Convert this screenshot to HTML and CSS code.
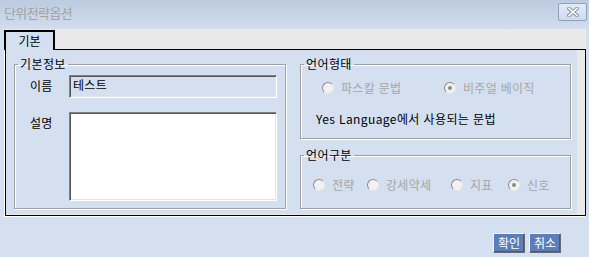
FILE: index.html
```html
<!DOCTYPE html>
<html lang="ko">
<head>
<meta charset="utf-8">
<title>단위전략옵션</title>
<link rel="stylesheet" href="styles.css">
</head>
<body>
<div class="window">
  <div class="titlebar">
    <span class="title">단위전략옵션</span>
    <button class="close" type="button" aria-label="닫기">
      <svg width="12" height="10" viewBox="0 0 12 10">
        <path d="M2 1.5 L10 8.5 M10 1.5 L2 8.5" stroke="#8794a8" stroke-width="3.6" stroke-linecap="square" fill="none"/>
        <path d="M2 1.5 L10 8.5 M10 1.5 L2 8.5" stroke="#ffffff" stroke-width="1.6" stroke-linecap="square" fill="none"/>
      </svg>
    </button>
  </div>

  <div class="tabctl">
    <div class="tabstrip">
      <div class="tab">기본</div>
      <div class="tabfill"></div>
    </div>
    <div class="page">
      <div class="pagebody">
        <fieldset class="group info">
          <legend>기본정보</legend>
          <div class="row row-name">
            <span class="lbl">이름</span>
            <div class="field name">테스트</div>
          </div>
          <div class="row row-memo">
            <span class="lbl">설명</span>
            <div class="field memo"></div>
          </div>
        </fieldset>

        <div class="col">
          <fieldset class="group lang">
            <legend>언어형태</legend>
            <div class="radios radios-lang">
              <span class="radio"><i class="dot"></i>파스칼 문법</span>
              <span class="radio"><i class="dot on"></i>비주얼 베이직</span>
            </div>
            <p class="note">Yes Language에서 사용되는 문법</p>
          </fieldset>

          <fieldset class="group kind">
            <legend>언어구분</legend>
            <div class="radios radios-kind">
              <span class="radio"><i class="dot"></i>전략</span>
              <span class="radio"><i class="dot"></i>강세약세</span>
              <span class="radio"><i class="dot"></i>지표</span>
              <span class="radio"><i class="dot on"></i>신호</span>
            </div>
          </fieldset>
        </div>
      </div>
    </div>
  </div>

  <div class="footer">
    <button class="btn" type="button">확인</button>
    <button class="btn" type="button">취소</button>
  </div>
</div>
</body>
</html>
```

FILE: styles.css
```css
* { box-sizing: border-box; }

html, body {
  margin: 0;
  padding: 0;
  background: #d4dff0;
}

body {
  width: 589px;
  height: 257px;
  overflow: hidden;
  font-family: "Noto Sans CJK KR", "Noto Sans", sans-serif;
  font-size: 12px;
  line-height: 14px;
  color: #000;
}

.window {
  width: 589px;
  height: 257px;
}

/* title bar */
.titlebar {
  height: 29px;
  display: flex;
  justify-content: space-between;
  align-items: flex-start;
  padding: 0 2px 0 4px;
  background: linear-gradient(#bccbdf, #d2ddee);
}

.title {
  color: #a3a3a3;
  font-size: 13px;
  line-height: 25px;
  letter-spacing: -0.6px;
}

.close {
  width: 29px;
  height: 18px;
  margin-top: 3px;
  padding: 0;
  display: flex;
  align-items: center;
  justify-content: center;
  border: 1px solid #8fa1bc;
  border-radius: 2px;
  background: linear-gradient(#e4ebf5, #cfdaeb);
}

/* tab control */
.tabctl {
  margin: 0 3px 0 4px;
}

.tabstrip {
  display: flex;
  height: 21px;
  background: #e9e9e9;
}

.tab {
  width: 51px;
  height: 20px;
  margin-top: 1px;
  border: 2px solid #000;
  border-bottom: 0;
  background: #d4dff0;
  text-align: center;
  line-height: 17px;
  font-size: 12px;
}

.tabfill {
  flex: 1;
  border-bottom: 1px solid #000;
}

.page {
  height: 166px;
  margin-left: 1px;
  border: 1px solid #000;
  border-top: 0;
  box-shadow: -1px 1px 0 #fff;
  background: #e9e9e9;
  padding-right: 8px;
  padding-bottom: 1px;
}

.pagebody {
  height: 100%;
  background: #d4dff0;
  display: flex;
  gap: 14px;
  padding: 7px 0 0 8px;
}

/* group boxes */
.group {
  margin: 0;
  padding: 0;
  border: 1px solid #a0a0a0;
  box-shadow: 1px 1px 0 #fff, inset 1px 1px 0 #fff;
  min-width: 0;
}

.group legend {
  margin-left: 3px;
  padding: 0 2px;
  font-size: 12px;
  line-height: 14px;
  letter-spacing: 0.4px;
}

.info {
  width: 272px;
  height: 152px;
}

.col {
  width: 271px;
  display: flex;
  flex-direction: column;
  gap: 9px;
}

.lang { height: 82px; }
.kind { height: 61px; }

/* info rows */
.row {
  display: flex;
  padding-left: 15px;
}

.row-name { margin-top: 4px; }
.row-memo { margin-top: 14px; }

.lbl {
  width: 39px;
  padding-top: 4px;
  letter-spacing: 0.3px;
}

.field {
  width: 208px;
  border: 1px solid;
  border-color: #808080 #fff #fff #808080;
  box-shadow: inset 1px 1px 0 #555, inset -1px -1px 0 #e4e4e4;
  padding: 2px 3px;
  letter-spacing: 0.3px;
}

.name {
  height: 23px;
  background: #d4dff0;
}

.memo {
  height: 89px;
  background: #fff;
}

/* radios */
.radios {
  display: grid;
  align-items: center;
  color: #a6a6a6;
  letter-spacing: 0.3px;
}

.radios-lang {
  grid-template-columns: 122px auto;
  padding-left: 21px;
  margin-top: 10px;
}

.radios-kind {
  grid-template-columns: 54px 84px 57px auto;
  padding-left: 12px;
  margin-top: 16px;
}

.radio {
  display: flex;
  align-items: center;
  gap: 7px;
  white-space: nowrap;
}

.dot {
  width: 12px;
  height: 12px;
  border-radius: 50%;
  border: 1px solid;
  border-color: #8c8c8c #e8e8e8 #e8e8e8 #8c8c8c;
  background: #f2f2f2;
  display: flex;
  align-items: center;
  justify-content: center;
}

.dot.on::after {
  content: "";
  width: 4px;
  height: 4px;
  border-radius: 50%;
  background: #8a8a8a;
}

.note {
  margin: 17px 0 0 15px;
  font-size: 12px;
  letter-spacing: 0.4px;
}

/* footer */
.footer {
  display: flex;
  justify-content: flex-end;
  gap: 4px;
  padding-right: 28px;
  margin-top: 17px;
}

.btn {
  width: 32px;
  height: 20px;
  padding: 0;
  font-family: inherit;
  font-size: 12px;
  line-height: 14px;
  color: #fff;
  background: #5b7dba;
  border: 1px solid;
  border-color: #f4f4f4 #6a6a6a #6a6a6a #f4f4f4;
  box-shadow: inset -1px -1px 0 #3f5a8a;
}
```
